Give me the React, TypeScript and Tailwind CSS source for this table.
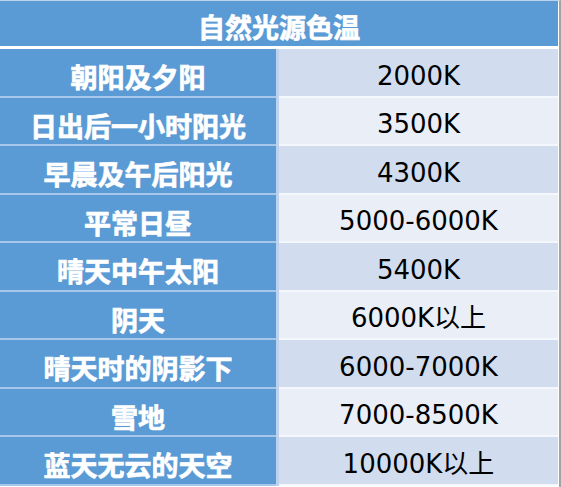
const rows = [
  { name: '朝阳及夕阳', temp: '2000K' },
  { name: '日出后一小时阳光', temp: '3500K' },
  { name: '早晨及午后阳光', temp: '4300K' },
  { name: '平常日昼', temp: '5000-6000K' },
  { name: '晴天中午太阳', temp: '5400K' },
  { name: '阴天', temp: '6000K以上' },
  { name: '晴天时的阴影下', temp: '6000-7000K' },
  { name: '雪地', temp: '7000-8500K' },
  { name: '蓝天无云的天空', temp: '10000K以上' },
];

export default function App() {
  return (
    <div className="w-[561px] h-[487px] bg-white overflow-hidden">
      <div className="w-[561px] h-[487px] border-r-2 border-[#a3a3a3] border-t border-t-[#bcd3ee]">
        <div className="w-[558px]">
          <div
            className="h-[45px] bg-[#5b9bd5] flex items-center justify-center pt-[6px] text-white font-bold text-[27px] leading-none [-webkit-text-stroke:0.7px_white]"
            style={{ fontFamily: '"Noto Sans CJK SC", sans-serif' }}
          >
            自然光源色温
          </div>
          <div className="h-[3px] bg-white" />
          <div className="flex flex-col">
            {rows.map((row, i) => (
              <div key={row.name} className="flex h-[48.5px] bg-[#bdd2ec] gap-[3px]">
                <div
                  className="w-[276px] bg-[#5b9bd5] border-b-2 border-[#a7c7ea] flex items-center justify-center pt-[9px] text-white font-bold text-[27px] leading-none [-webkit-text-stroke:0.7px_white]"
                  style={{ fontFamily: '"Noto Sans CJK SC", sans-serif' }}
                >
                  {row.name}
                </div>
                <div
                  className={`flex-1 border-b-2 border-[#f4f7fb] flex items-center justify-center pt-[7px] text-black text-[26px] leading-none ${
                    i % 2 === 0 ? 'bg-[#d1ddef]' : 'bg-[#e9eef7]'
                  }`}
                  style={{ fontFamily: '"DejaVu Sans", "Noto Sans CJK SC", sans-serif' }}
                >
                  {row.temp}
                </div>
              </div>
            ))}
          </div>
        </div>
      </div>
    </div>
  );
}
